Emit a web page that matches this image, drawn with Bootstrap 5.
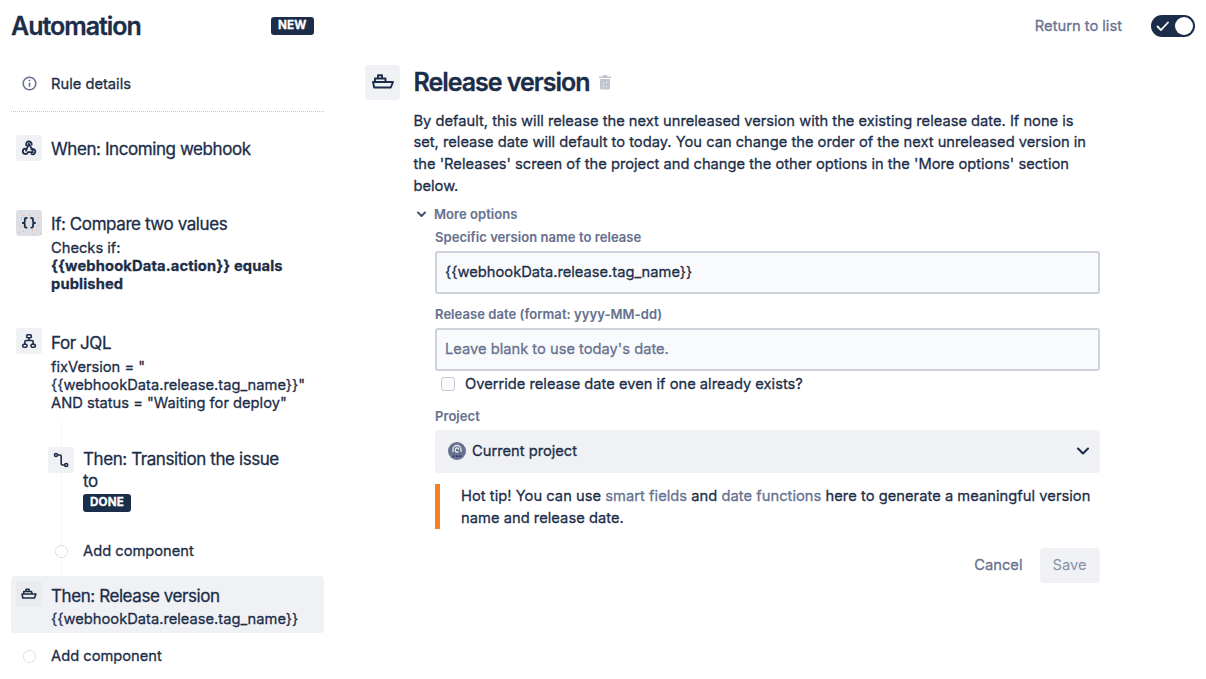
<!DOCTYPE html>
<html lang="en">
<head>
<meta charset="utf-8">
<meta name="viewport" content="width=device-width, initial-scale=1">
<title>Automation</title>
<link href="https://cdn.jsdelivr.net/npm/bootstrap@5.3.0/dist/css/bootstrap.min.css" rel="stylesheet">
<style>
:root{--ink:#1b2d48;--muted-ink:#66728f;--panel:#f0f1f4}
body{font-family:Inter,"Liberation Sans",sans-serif;color:var(--ink);background:#fff;font-size:14.7px;line-height:18.4px;height:679px;overflow:hidden;-webkit-text-stroke:.28px}
.app-bar{height:52px;padding:0 11px}
.brand-side{width:302.5px}
.page-title{font-size:25px;line-height:30px;font-weight:600;letter-spacing:-1.02px}
.lozenge{background:var(--ink);color:#fff;font-weight:700;font-size:11.7px;line-height:17.5px;border-radius:3px;padding:0 7px;height:17.5px;letter-spacing:.15px}
.side{width:313px;margin-left:11px}
.side-row{gap:9px;padding-left:5px}
.icon-tile{width:26px;height:26px;border-radius:3px;background:var(--panel);flex:none}
.step-title{font-size:17px;line-height:21.5px;letter-spacing:-.42px}
.strong-text{font-weight:700;letter-spacing:.14px}
.details{height:59.5px;border-bottom:1.5px dotted #c3c8d2}
.side-icon{width:26px;flex:none}
.nested{margin-left:32px}
.selected-row{background:var(--panel);border-radius:4px;height:57px;padding-top:5px}
.ring{width:13px;height:13px;border:1px dotted #b4bac8;border-radius:50%}
.trail{background:linear-gradient(#f8f9fa,#f8f9fa) 50px 0/1px 100% no-repeat}
.main-col{margin-left:41px;width:734.5px;padding-top:12.5px}
.big-tile{width:35px;height:35px;border-radius:4px;background:var(--panel);flex:none}
.intro{font-size:14.7px;line-height:21.7px}
.field-label{font-size:13px;line-height:18px;font-weight:600;color:var(--muted-ink);letter-spacing:.06px;-webkit-text-stroke:.1px}
.form-control.field{height:43px;border:2px solid #ced2da;border-radius:3px;background:#f9fafb;font-size:14.7px;color:var(--ink);padding:0 8px}
.form-control.field::placeholder{color:var(--muted-ink);opacity:1}
.form-check-input.box{width:14px;height:14px;border:1.5px solid #c3c8d2;border-radius:3px;background-color:#fafbfc;margin:0}
.picker{height:43px;background:var(--panel);border-radius:4px;padding:0 10px 0 13px}
.tip{border-left:5px solid #f58025;padding-left:21px;padding-top:1px;height:45px;line-height:22.5px;letter-spacing:.035px}
.muted-link{color:var(--muted-ink);text-decoration:none}
.btn.flat{font-size:14.7px;height:35px;line-height:18px;border:0;border-radius:4px;padding:0;color:var(--muted-ink)}
.btn.flat.save{width:60px;background:#f0f1f4;color:#8590a6;-webkit-text-stroke:0}
.switcher{width:44px;height:22px;border-radius:11px;background:var(--ink);padding:0 2px 0 5px}
.knob{width:18px;height:18px;border-radius:50%;background:#fff}
svg{display:block;flex:none}
</style>
</head>
<body>
<header class="app-bar d-flex align-items-center justify-content-between">
  <div class="brand-side d-flex align-items-center justify-content-between">
    <h1 class="page-title m-0 text-nowrap">Automation</h1>
    <span class="lozenge">NEW</span>
  </div>
  <div class="d-flex align-items-center">
    <a href="#" class="muted-link text-nowrap" style="margin-right:29px">Return to list</a>
    <div class="switcher d-flex align-items-center justify-content-between" role="switch" aria-checked="true">
      <svg width="14" height="12" viewBox="0 0 14 12" fill="none" stroke="#fff" stroke-width="1.8" stroke-linecap="round" stroke-linejoin="round"><path d="M1.500 6.500 5 10l7-7.500"/></svg>
      <span class="knob"></span>
    </div>
  </div>
</header>

<div class="d-flex">
<aside class="side flex-shrink-0 text-nowrap">
  <div class="details side-row d-flex">
    <div class="side-icon d-flex justify-content-center" style="padding-top:23.500px">
      <svg width="15" height="15" viewBox="0 0 15 15" fill="none" stroke="#66728f" stroke-width="1.600"><circle cx="7.500" cy="7.500" r="6.300"/><path d="M7.500 6.700v4M7.500 3.800v1.500"/></svg>
    </div>
    <div style="padding-top:22.500px">Rule details</div>
  </div>

  <div class="side-row d-flex" style="margin-top:23.500px;height:74.500px">
    <div class="icon-tile d-flex align-items-center justify-content-center">
      <svg width="16" height="16" viewBox="0 0 16 16" fill="none" stroke="#1b2d48" stroke-width="1.800" stroke-linecap="round"><path d="M5.300 5.300A2.800 2.800 0 1 1 10.700 4.500M7.900 3.900 5 10.700M7.900 3.900l3.800 6.500M4.200 8.600a2.700 2.700 0 1 0 2.900 3.500H12M10.300 9.300a2.700 2.700 0 1 1 .1 4.700"/></svg>
    </div>
    <div class="step-title" style="padding-top:4px">When: Incoming webhook</div>
  </div>

  <div class="side-row d-flex" style="height:118.500px">
    <div class="icon-tile d-flex align-items-center justify-content-center" style="background:#dcdfe5">
      <svg width="26" height="26" viewBox="0 0 26 26" fill="none">
        <g fill="#f4a46c"><path d="M6 5h1v1H6zM8 9h1v1H8zM5 8h1v1H5zM22 7h1v1h-1zM13 5h1v1h-1zM3 22h1v1H3zM7 21h1v1H7zM16 20h1v1h-1zM20 20h1v1h-1zM24 23h1v1h-1zM22 15h1v1h-1zM4 16h1v1H4zM17 24h1v1h-1z"/></g>
        <g stroke="#1b2d48" stroke-width="1.800"><path d="M11.300 8H10.200Q8.800 8 8.800 9.200v2.200Q8.800 12.800 6 12.800 8.800 12.800 8.800 14.200v2.200q0 1.200 1.400 1.200h1.100M14.500 8h1.100q1.400 0 1.400 1.200v2.200q0 1.400 2.800 1.400-2.800 0-2.800 1.400v2.200q0 1.200-1.400 1.200H14.500"/></g>
      </svg>
    </div>
    <div>
      <div class="step-title" style="padding-top:4.500px;margin-bottom:3px">If: Compare two values</div>
      <div>Checks if:</div>
      <div class="strong-text">{{webhookData.action}} equals<br>published</div>
    </div>
  </div>

  <div class="side-row d-flex" style="height:91px">
    <div class="icon-tile d-flex align-items-center justify-content-center">
      <svg width="16" height="16" viewBox="0 0 16 16" fill="none" stroke="#1b2d48" stroke-width="1.600"><rect x="5.700" y="1.700" width="4.600" height="3" rx="1"/><rect x="1.700" y="11.200" width="4.300" height="3" rx="1.200"/><rect x="10" y="11.200" width="4.300" height="3" rx="1.200"/><path d="M8 4.700v3M3.900 11V8.500q0-1 1-1h6.200q1 0 1 1V11"/></svg>
    </div>
    <div>
      <div class="step-title" style="padding-top:4.500px;margin-bottom:3.500px">For JQL</div>
      <div>fixVersion = "<br>{{webhookData.release.tag_name}}"<br>AND status = "Waiting for deploy"</div>
    </div>
  </div>

  <div class="trail" style="padding-top:28px;height:157px">
    <div class="side-row nested d-flex" style="height:93px">
      <div class="icon-tile d-flex align-items-center justify-content-center">
        <svg width="16" height="16" viewBox="0 0 16 16" fill="none" stroke="#1b2d48" stroke-width="1.600"><circle cx="3" cy="3" r="1.500"/><circle cx="13.200" cy="13" r="1.500"/><path d="M4.500 3H7q1.200 0 1.200 1.200v7.600q0 1.200 1.200 1.200h2.300"/></svg>
      </div>
      <div>
        <div class="step-title" style="padding-top:2px">Then: Transition the issue<br>to</div>
        <span class="lozenge d-inline-block" style="margin-top:1.500px">DONE</span>
      </div>
    </div>
    <div class="side-row nested d-flex align-items-center" style="height:22px">
      <div class="side-icon d-flex justify-content-center"><span class="ring bg-white"></span></div>
      <div>Add component</div>
    </div>
  </div>

  <div class="selected-row side-row d-flex">
    <div class="icon-tile d-flex align-items-center justify-content-center" style="background:#e9ebef">
      <svg width="16" height="16" viewBox="0 0 22 22" fill="none" stroke="#1b2d48" stroke-width="2.200" stroke-linejoin="round"><path d="M1.500 11h19L18.500 16.500H2.500zM3.800 11V7.500h10.500L15.500 11M7 7.500V4.500h4v3"/></svg>
    </div>
    <div>
      <div class="step-title" style="padding-top:4.500px;margin-bottom:3px">Then: Release version</div>
      <div>{{webhookData.release.tag_name}}</div>
    </div>
  </div>
  <div class="side-row d-flex align-items-center" style="height:46px">
    <div class="side-icon d-flex justify-content-center"><span class="ring"></span></div>
    <div>Add component</div>
  </div>
</aside>

<main class="main-col flex-shrink-0 text-nowrap">
  <div class="d-flex" style="gap:13.500px">
    <div class="big-tile d-flex align-items-center justify-content-center">
      <svg width="22" height="22" viewBox="0 0 22 22" fill="none" stroke="#1b2d48" stroke-width="1.900" stroke-linejoin="round"><path d="M1 11h20L18.800 16.500H2.200zM3 11V7.500h10.500V11M6 7.500V4.200h4v3.300"/></svg>
    </div>
    <div>
      <div class="d-flex align-items-center" style="height:34px;gap:9px">
        <h2 class="page-title m-0">Release version</h2>
        <svg width="14" height="16" viewBox="0 0 14 16" fill="#c1c6d0"><path d="M1 2.500h3.500L5.200 1h3.600l.7 1.500H13V4H1zM2 5h10v9q0 1.500-1.500 1.500h-7Q2 15.500 2 14z"/><path d="M5 9h1v1H5zM8 8h1v1H8zM5 12h1v1H5zM8 12h1v1H8z" fill="#fff"/></svg>
      </div>
      <p class="intro" style="margin:12px 0 8px">By default, this will release the next unreleased version with the existing release date. If none is<br>set, release date will default to today. You can change the order of the next unreleased version in<br>the 'Releases' screen of the project and change the other options in the 'More options' section<br>below.</p>
      <div class="d-flex align-items-center field-label" style="gap:7.500px;padding-left:2px">
        <svg width="11" height="8" viewBox="0 0 11 8" fill="none" stroke="#44546f" stroke-width="2" stroke-linecap="round" stroke-linejoin="round"><path d="M2 2.500 5.500 6 9 2.500"/></svg>
        <span>More options</span>
      </div>
    </div>
  </div>

  <div style="margin-left:70px">
    <label class="field-label d-block" for="ver" style="margin-top:5px;margin-bottom:4.500px">Specific version name to release</label>
    <input id="ver" class="form-control field" value="{{webhookData.release.tag_name}}">
    <label class="field-label d-block" for="date" style="margin-top:11px;margin-bottom:5px">Release date (format: yyyy-MM-dd)</label>
    <input id="date" class="form-control field" placeholder="Leave blank to use today's date.">
    <div class="d-flex align-items-center" style="gap:10px;padding-left:6px;height:26px">
      <input id="ovr" class="form-check-input box" type="checkbox">
      <label for="ovr">Override release date even if one already exists?</label>
    </div>
    <div class="field-label" style="margin-top:10.500px;margin-bottom:4.500px">Project</div>
    <div class="picker d-flex align-items-center">
      <svg width="18" height="18" viewBox="0 0 18 18" fill="none"><circle cx="9" cy="9" r="9" fill="#66728f"/><path d="M5 10V7.500a4 4 0 0 1 8 0V10M10.500 10H8.300Q7.300 10 7.300 9V7.700a1.700 1.700 0 0 1 3.400 0" stroke="#e3e6eb" stroke-width="1.300"/><path d="M5 13.500h1.500v1.500H5zM8.200 13.500h1.500v1.500H8.200zM11.400 13.500h1.500v1.500h-1.500z" fill="#1b2d48"/></svg>
      <span style="margin-left:6px">Current project</span>
      <svg class="ms-auto" width="14" height="10" viewBox="0 0 14 10" fill="none" stroke="#1b2d48" stroke-width="2.100" stroke-linecap="round" stroke-linejoin="round"><path d="M2 2.500 7 7.500 12 2.500"/></svg>
    </div>
    <div class="tip" style="margin-top:11px">Hot tip! You can use <a href="#" class="muted-link">smart fields</a> and <a href="#" class="muted-link">date functions</a> here to generate a meaningful version<br>name and release date.</div>
    <div class="d-flex justify-content-end" style="margin-top:19px;gap:17px">
      <button class="btn flat" type="button">Cancel</button>
      <button class="btn flat save" type="button">Save</button>
    </div>
  </div>
</main>
</div>
<script src="https://cdn.jsdelivr.net/npm/bootstrap@5.3.0/dist/js/bootstrap.bundle.min.js"></script>
</body>
</html>
